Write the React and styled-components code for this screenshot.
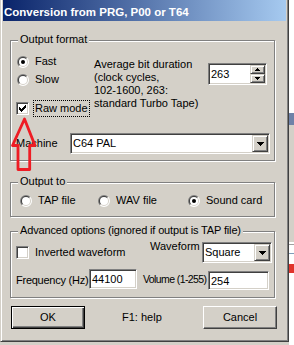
import React from "react";
import styled, { createGlobalStyle, css } from "styled-components";

const FACE = "#d4d0c8";

const GlobalStyle = createGlobalStyle`
  html, body { margin: 0; padding: 0; background: ${FACE}; }
  body { font-family: "Liberation Sans", Arial, sans-serif; font-size: 11px; color: #000; }
  * { box-sizing: border-box; }
`;

const sunken = css`
  border: 1px solid;
  border-color: #808080 #ffffff #ffffff #808080;
  box-shadow: inset 1px 1px 0 #404040, inset -1px -1px 0 ${FACE};
`;

const raisedSmall = css`
  border: 1px solid;
  border-color: ${FACE} #404040 #404040 ${FACE};
  box-shadow: inset 1px 1px 0 #ffffff, inset -1px -1px 0 #808080;
  background: ${FACE};
`;

const Screen = styled.div`
  position: relative;
  width: 294px;
  height: 345px;
  overflow: hidden;
  display: flex;
  align-items: flex-start;
  background: ${FACE};
`;

const Window = styled.div`
  flex: none;
  width: 289px;
  height: 342px;
  display: flex;
  flex-direction: column;
  background: ${FACE};
  border-left: 1px solid ${FACE};
  border-right: 1px solid #404040;
  border-bottom: 1px solid #404040;
  box-shadow: inset 1px 0 0 #ffffff, inset -1px -1px 0 #808080;
  padding: 0 2px 2px 2px;
`;

const TitleBar = styled.div`
  flex: none;
  height: 21px;
  background: linear-gradient(to right, #0a246a, #a6caf0);
  color: #ffffff;
  font-weight: bold;
  font-size: 11.5px;
  line-height: 15px;
  padding: 5px 0 0 1px;
  white-space: nowrap;
`;

const Body = styled.div`
  display: flex;
  flex-direction: column;
  align-items: flex-start;
  padding: 19px 0 0 7px;
`;

const GroupBox = styled.div`
  position: relative;
  flex: none;
  width: 265px;
  height: ${(p) => p.$h}px;
  margin-top: ${(p) => p.$mt || 0}px;
  border: 1px solid #808080;
  box-shadow: inset 1px 1px 0 #ffffff, 1px 1px 0 #ffffff;
  padding: ${(p) => p.$pad};
`;

const Legend = styled.span`
  position: absolute;
  left: 7px;
  top: -8px;
  padding: 0 2px;
  background: ${FACE};
  line-height: 13px;
  white-space: nowrap;
  letter-spacing: ${(p) => p.$ls || 0}px;
`;

const TopSection = styled.div`
  display: flex;
  align-items: flex-start;
`;

const OptionStack = styled.div`
  flex: none;
  width: 78px;
  display: flex;
  flex-direction: column;
`;

const Option = styled.div`
  flex: none;
  display: flex;
  align-items: center;
  height: 17px;
  margin-top: ${(p) => p.$mt || 0}px;
  width: ${(p) => (p.$w ? `${p.$w}px` : "auto")};
`;

const Cell = styled.span`
  flex: none;
  width: 13px;
  height: 13px;
  display: flex;
  align-items: center;
`;

const OptText = styled.span`
  margin-left: 4px;
  padding: 1px;
  line-height: 13px;
  white-space: nowrap;
  border: 1px ${(p) => (p.$focus ? "dotted #000000" : "solid transparent")};
`;

const CheckFrame = styled.span`
  flex: none;
  width: 13px;
  height: 13px;
  background: #ffffff;
  ${sunken};
  display: flex;
  align-items: center;
  justify-content: center;
`;

const RadioSvg = styled.svg`
  display: block;
  margin-left: 1px;
`;

const InfoText = styled.div`
  flex: none;
  width: 114px;
  margin-top: 5px;
  line-height: 13px;
  white-space: nowrap;
`;

const Spinner = styled.div`
  flex: none;
  width: 59px;
  height: 22px;
  margin-top: 10px;
  background: #ffffff;
  ${sunken};
  padding: 1px;
  display: flex;
`;

const FieldText = styled.span`
  flex: 1;
  padding-left: 1px;
  line-height: ${(p) => p.$lh}px;
  white-space: nowrap;
`;

const SpinColumn = styled.div`
  flex: none;
  width: 15px;
  display: flex;
  flex-direction: column;
`;

const SpinButton = styled.div`
  flex: none;
  height: 9px;
  ${raisedSmall};
  display: flex;
  align-items: center;
  justify-content: center;
`;

const FieldRow = styled.div`
  display: flex;
  align-items: ${(p) => p.$align || "center"};
  margin-top: ${(p) => p.$mt || 0}px;
`;

const Label = styled.span`
  flex: none;
  width: ${(p) => p.$w}px;
  margin-top: ${(p) => p.$mt || 0}px;
  margin-left: ${(p) => p.$ml || 0}px;
  line-height: 13px;
  white-space: nowrap;
  font-size: ${(p) => p.$fs || 11}px;
  letter-spacing: ${(p) => p.$ls || 0}px;
`;

const Combo = styled.div`
  flex: none;
  width: ${(p) => p.$w}px;
  height: 21px;
  background: #ffffff;
  ${sunken};
  padding: 1px;
  display: flex;
  align-items: stretch;
`;

const DropButton = styled.div`
  flex: none;
  width: 16px;
  ${raisedSmall};
  display: flex;
  align-items: center;
  justify-content: center;
`;

const TextInput = styled.div`
  flex: none;
  width: ${(p) => p.$w}px;
  height: ${(p) => p.$h}px;
  margin-top: ${(p) => p.$mt || 0}px;
  background: #ffffff;
  ${sunken};
  padding: 1px 1px 1px 2px;
  line-height: ${(p) => p.$h - 3}px;
  white-space: nowrap;
`;

const OutputGrid = styled.div`
  display: grid;
  grid-template-columns: 78px 90px auto;
`;

const ButtonRow = styled.div`
  display: flex;
  align-items: center;
  margin-top: 8px;
  padding-left: 1px;
`;

const PushButton = styled.div`
  flex: none;
  width: 74px;
  height: 23px;
  display: flex;
  align-items: center;
  justify-content: center;
  background: ${FACE};
  line-height: 13px;
  ${(p) =>
    p.$default
      ? css`
          border: 1px solid #000000;
          box-shadow: inset 1px 1px 0 #ffffff, inset -1px -1px 0 #404040,
            inset -2px -2px 0 #808080;
        `
      : css`
          border: 1px solid;
          border-color: #ffffff #404040 #404040 #ffffff;
          box-shadow: inset -1px -1px 0 #808080;
        `}
`;

const HelpText = styled.span`
  flex: none;
  width: 81px;
  margin-left: 37px;
  line-height: 13px;
`;

const Backdrop = styled.div`
  flex: none;
  width: 5px;
  height: 345px;
  display: flex;
  flex-direction: column;
`;

const Band = styled.div`
  flex: none;
  height: ${(p) => p.$h}px;
  background: ${(p) => p.$c};
`;

const ArrowMark = styled.svg`
  position: absolute;
  left: 8px;
  top: 112px;
  pointer-events: none;
  overflow: visible;
`;

/* ---------- small drawings ---------- */

const CHECK_COLS = [2, 3, 4, 3, 2, 1, 0];

const CheckMark = () => (
  <svg width="7" height="7" viewBox="0 0 7 7" shapeRendering="crispEdges" style={{ display: "block" }}>
    {CHECK_COLS.map((y, x) => (
      <rect key={x} x={x} y={y} width="1" height="3" fill="#000" />
    ))}
  </svg>
);

const Checkbox = ({ checked }) => (
  <CheckFrame>{checked && <CheckMark />}</CheckFrame>
);

const half = (r, tl) => {
  const d = r * 0.7071;
  const a = `${6 + d} ${6 - d}`;
  const b = `${6 - d} ${6 + d}`;
  return `M${a} A${r} ${r} 0 0 ${tl ? 0 : 1} ${b} Z`;
};

const Radio = ({ checked }) => (
  <Cell>
    <RadioSvg width="12" height="12" viewBox="0 0 12 12">
      <path d={half(6, true)} fill="#808080" />
      <path d={half(6, false)} fill="#ffffff" />
      <path d={half(5, true)} fill="#404040" />
      <path d={half(5, false)} fill={FACE} />
      <circle cx="6" cy="6" r="4" fill="#ffffff" />
      {checked && <circle cx="6" cy="6" r="2" fill="#000000" />}
    </RadioSvg>
  </Cell>
);

const TriDown = ({ w }) => {
  const rows = [];
  for (let i = 0; i * 2 < w; i++) rows.push(<rect key={i} x={i} y={i} width={w - 2 * i} height="1" fill="#000" />);
  return (
    <svg width={w} height={rows.length} shapeRendering="crispEdges" style={{ display: "block" }}>
      {rows}
    </svg>
  );
};

const TriUp = ({ w }) => {
  const n = Math.ceil(w / 2);
  const rows = [];
  for (let i = 0; i < n; i++) rows.push(<rect key={i} x={i} y={n - 1 - i} width={w - 2 * i} height="1" fill="#000" />);
  return (
    <svg width={w} height={n} shapeRendering="crispEdges" style={{ display: "block" }}>
      {rows}
    </svg>
  );
};

const ComboBox = ({ w, value }) => (
  <Combo $w={w}>
    <FieldText $lh={17}>{value}</FieldText>
    <DropButton>
      <TriDown w={7} />
    </DropButton>
  </Combo>
);

const BACKDROP = [
  [113, "#ffffff"],
  [12, "#6f82a8"],
  [117, FACE],
  [2, "#ffffff"],
  [1, "#a0a0a0"],
  [8, "#ffffff"],
  [1, "#7f9db9"],
  [10, "#ffffff"],
  [9, "#e0342c"],
  [72, "#ffffff"],
];

export default function App() {
  return (
    <>
      <GlobalStyle />
      <Screen>
        <Window>
          <TitleBar>Conversion from PRG, P00 or T64</TitleBar>
          <Body>
            <GroupBox $h={121} $pad="12px 0 0 5px">
              <Legend>Output format</Legend>
              <TopSection>
                <OptionStack>
                  <Option>
                    <Radio checked />
                    <OptText>Fast</OptText>
                  </Option>
                  <Option $mt={1}>
                    <Radio />
                    <OptText>Slow</OptText>
                  </Option>
                  <Option $mt={12}>
                    <Checkbox checked />
                    <OptText $focus>Raw mode</OptText>
                  </Option>
                </OptionStack>
                <InfoText>
                  Average bit duration
                  <br />
                  (clock cycles,
                  <br />
                  102-1600, 263:
                  <br />
                  standard Turbo Tape)
                </InfoText>
                <Spinner>
                  <FieldText $lh={18}>263</FieldText>
                  <SpinColumn>
                    <SpinButton>
                      <TriUp w={5} />
                    </SpinButton>
                    <SpinButton>
                      <TriDown w={5} />
                    </SpinButton>
                  </SpinColumn>
                </Spinner>
              </TopSection>
              <FieldRow $mt={16}>
                <Label $w={54}>Machine</Label>
                <ComboBox w={200} value="C64 PAL" />
              </FieldRow>
            </GroupBox>

            <GroupBox $h={35} $mt={21} $pad="9px 0 0 8px">
              <Legend>Output to</Legend>
              <OutputGrid>
                <Option>
                  <Radio />
                  <OptText>TAP file</OptText>
                </Option>
                <Option>
                  <Radio />
                  <OptText>WAV file</OptText>
                </Option>
                <Option>
                  <Radio checked />
                  <OptText>Sound card</OptText>
                </Option>
              </OutputGrid>
            </GroupBox>

            <GroupBox $h={67} $mt={14} $pad="10px 0 0 5px">
              <Legend $ls={-0.15}>Advanced options (ignored if output is TAP file)</Legend>
              <FieldRow $align="flex-start">
                <Option $w={134} $mt={2}>
                  <Checkbox />
                  <OptText>Inverted waveform</OptText>
                </Option>
                <Label $w={52} $mt={-2}>
                  Waveform
                </Label>
                <ComboBox w={70} value="Square" />
              </FieldRow>
              <FieldRow $align="flex-start" $mt={6}>
                <Label $w={73} $mt={5} $ls={-0.25}>
                  Frequency (Hz)
                </Label>
                <TextInput $w={48} $h={20}>
                  44100
                </TextInput>
                <Label $w={65} $ml={6} $mt={4} $fs={10.5} $ls={-0.6}>
                  Volume (1-255)
                </Label>
                <TextInput $w={61} $h={19} $mt={2}>
                  254
                </TextInput>
              </FieldRow>
            </GroupBox>

            <ButtonRow>
              <PushButton $default>OK</PushButton>
              <HelpText>F1: help</HelpText>
              <PushButton>Cancel</PushButton>
            </ButtonRow>
          </Body>
        </Window>
        <Backdrop>
          {BACKDROP.map(([h, c], i) => (
            <Band key={i} $h={h} $c={c} />
          ))}
        </Backdrop>
        <ArrowMark width="32" height="62" viewBox="0 0 32 62">
          <path
            d="M16.5 7 L27 33.5 L21.7 33.5 L21.7 57.5 L10 57.5 L10 33.5 L4.5 33.5 Z"
            fill="none"
            stroke="#ee1c24"
            strokeWidth="2.8"
            strokeLinejoin="round"
          />
        </ArrowMark>
      </Screen>
    </>
  );
}
